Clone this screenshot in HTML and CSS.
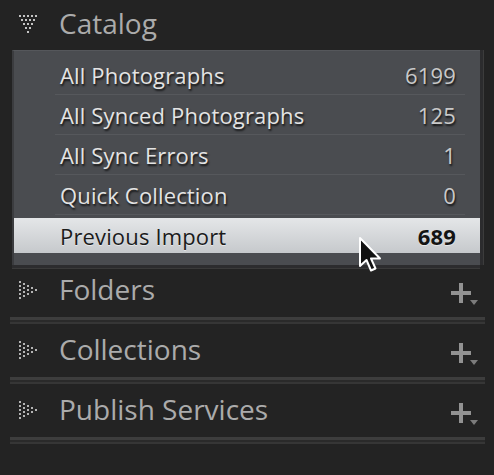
FILE: index.html
```html
<!DOCTYPE html>
<html>
<head>
<meta charset="utf-8">
<link rel="stylesheet" href="styles.css">
</head>
<body>
<div class="sidebar">
  <section class="group">
    <div class="header">
      <svg class="disclosure" width="24" height="22" viewBox="0 0 24 22">
        <g fill="#c4c4c4">
          <rect x="2" y="1" width="2" height="2"/><rect x="6" y="1" width="2" height="2"/><rect x="10" y="1" width="2" height="2"/><rect x="14" y="1" width="2" height="2"/><rect x="18" y="1" width="2" height="2"/>
          <rect x="4" y="5" width="2" height="2"/><rect x="8" y="5" width="2" height="2"/><rect x="12" y="5" width="2" height="2"/><rect x="16" y="5" width="2" height="2"/>
          <rect x="6" y="9" width="2" height="2"/><rect x="10" y="9" width="2" height="2"/><rect x="14" y="9" width="2" height="2"/>
          <rect x="8" y="13" width="2" height="2"/><rect x="12" y="13" width="2" height="2"/>
          <rect x="10" y="17" width="2" height="2"/>
        </g>
      </svg>
      <span class="title">Catalog</span>
    </div>
    <div class="panel">
      <div class="row"><span class="name">All Photographs</span><span class="count">6199</span></div>
      <div class="row"><span class="name">All Synced Photographs</span><span class="count">125</span></div>
      <div class="row"><span class="name">All Sync Errors</span><span class="count">1</span></div>
      <div class="row"><span class="name">Quick Collection</span><span class="count">0</span></div>
      <div class="row selected"><span class="name">Previous Import</span><span class="count">689</span></div>
    </div>
  </section>

  <section class="group collapsed">
    <div class="header">
      <svg class="disclosure" width="24" height="22" viewBox="0 0 24 22"><use href="#tri-right"/></svg>
      <span class="title">Folders</span>
      <svg class="plus" width="32" height="26" viewBox="0 0 32 26"><use href="#plus"/></svg>
    </div>
    <div class="divider"></div>
  </section>

  <section class="group collapsed">
    <div class="header">
      <svg class="disclosure" width="24" height="22" viewBox="0 0 24 22"><use href="#tri-right"/></svg>
      <span class="title">Collections</span>
      <svg class="plus" width="32" height="26" viewBox="0 0 32 26"><use href="#plus"/></svg>
    </div>
    <div class="divider"></div>
  </section>

  <section class="group collapsed">
    <div class="header">
      <svg class="disclosure" width="24" height="22" viewBox="0 0 24 22"><use href="#tri-right"/></svg>
      <span class="title">Publish Services</span>
      <svg class="plus" width="32" height="26" viewBox="0 0 32 26"><use href="#plus"/></svg>
    </div>
    <div class="divider"></div>
  </section>
</div>

<svg class="cursor" width="28" height="38" viewBox="0 0 28 38">
  <path d="M2 2 L2 30 L8.5 24 L13 34.5 L17.5 32.5 L13 22.5 L22 22.5 Z" fill="#111" stroke="#fff" stroke-width="2" stroke-linejoin="round"/>
</svg>

<svg width="0" height="0" style="position:absolute">
  <defs>
    <g id="tri-right" fill="#b4b4b4">
      <rect x="2" y="1" width="2" height="2"/><rect x="2" y="5" width="2" height="2"/><rect x="2" y="9" width="2" height="2"/><rect x="2" y="13" width="2" height="2"/><rect x="2" y="17" width="2" height="2"/>
      <rect x="6" y="3" width="2" height="2"/><rect x="6" y="7" width="2" height="2"/><rect x="6" y="11" width="2" height="2"/><rect x="6" y="15" width="2" height="2"/>
      <rect x="10" y="5" width="2" height="2"/><rect x="10" y="9" width="2" height="2"/><rect x="10" y="13" width="2" height="2"/>
      <rect x="14" y="7" width="2" height="2"/><rect x="14" y="11" width="2" height="2"/>
      <rect x="18" y="9" width="2" height="2"/>
    </g>
    <g id="plus">
      <rect x="10" y="3" width="4" height="20" fill="#929292"/>
      <rect x="2" y="11" width="20" height="4" fill="#929292"/>
      <path d="M21 20 L29 20 L25 25 Z" fill="#7c7c7c"/>
    </g>
  </defs>
</svg>
</body>
</html>
```

FILE: styles.css
```css
html, body {
  margin: 0;
  padding: 0;
  background: #232323;
}

body {
  width: 494px;
  height: 475px;
  overflow: hidden;
  position: relative;
  font-family: "Open Sans", "Noto Sans", sans-serif;
}

.sidebar {
  display: flex;
  flex-direction: column;
}

.header {
  height: 50px;
  display: flex;
  align-items: center;
  padding-left: 17px;
  padding-right: 13px;
}

.disclosure {
  flex: none;
  margin-right: 18px;
}

.title {
  font-size: 28px;
  color: #ababab;
  flex: 1;
  line-height: 1;
  margin-top: -4px;
}

.plus {
  flex: none;
  margin-top: 4px;
}

.panel {
  margin: 0 14px 0 12px;
  background: #4a4c50;
  border-top: 1px solid #55575b;
  border-left: 2px solid #3b3c3f;
  padding-top: 4px;
  padding-bottom: 10px;
  box-shadow: 0 3px 0 #2c2c2e, 0 4px 0 #3a3a3a, 3px 0 0 #2c2c2e, 4px 0 0 #3c3c3c;
}

.row {
  height: 40px;
  display: flex;
  align-items: center;
  justify-content: space-between;
  padding: 0 24px 0 46px;
  font-size: 22px;
  letter-spacing: 0.15px;
  color: #e4e4e4;
  text-shadow: 1px 2px 2px rgba(0, 0, 0, 0.75);
  position: relative;
}

.row:not(.selected)::after {
  content: "";
  position: absolute;
  left: 41px;
  right: 15px;
  bottom: 0;
  height: 1px;
  background: #56585c;
}

.row .count {
  color: #c9c9c9;
}

.row.selected {
  height: 35px;
  margin: 3px 0 2px;
  background: linear-gradient(#e4e6e8, #c6c9cc);
  color: #1b1b1b;
  text-shadow: 0 1px 0 rgba(255, 255, 255, 0.5);
}

.row.selected .count {
  color: #141414;
  font-weight: 700;
}

.collapsed .header {
  height: 52px;
}

.divider {
  margin: 0 9px 0 10px;
  height: 2px;
  border-top: 3px solid #3d3d3d;
  border-bottom: 2px solid #363636;
  background: #2a2a2a;
  margin-bottom: 1px;
}

.cursor {
  position: absolute;
  left: 358px;
  top: 236px;
}
```
